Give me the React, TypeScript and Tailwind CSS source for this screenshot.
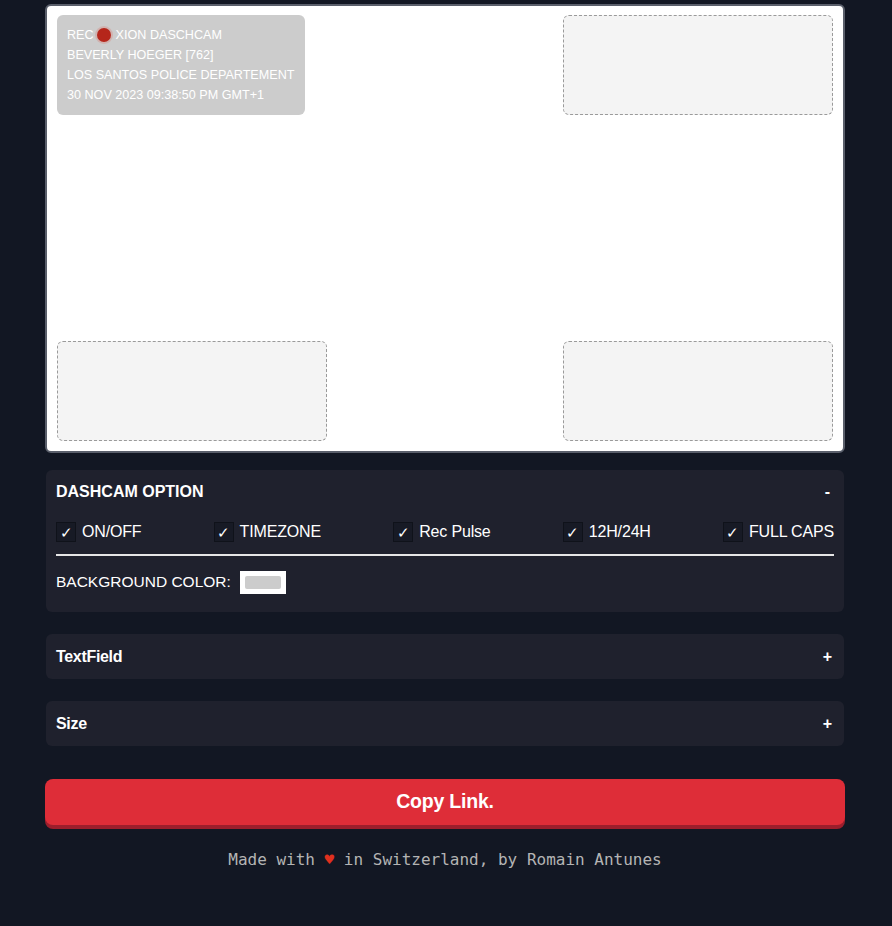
const checks = ["ON/OFF", "TIMEZONE", "Rec Pulse", "12H/24H", "FULL CAPS"];

function DropZone() {
  return <div className="h-[100px] w-[270px] rounded-md border border-dashed border-[#9a9a9a] bg-[#f4f4f4]" />;
}

function Check({ label }: { label: string }) {
  return (
    <label className="flex items-center gap-[6px]">
      <span className="flex h-[20px] w-[20px] items-center justify-center border border-[#0f121a] bg-[#171a25] text-[15px] leading-none text-white">
        ✓
      </span>
      <span className="text-[16px] tracking-[-0.01em] text-white">{label}</span>
    </label>
  );
}

function Collapsed({ title }: { title: string }) {
  return (
    <div className="mt-[22px] flex h-[45px] items-center justify-between rounded-md bg-[#1f212d] px-[10px]">
      <span className="text-[16px] font-bold tracking-[-0.02em] text-white">{title}</span>
      <span className="mr-[2px] text-[16px] font-bold text-white">+</span>
    </div>
  );
}

export default function App() {
  return (
    <div className="min-h-screen bg-[#121723] pb-10 pt-[4px] font-['Liberation_Sans',Arial,sans-serif]">
      <div className="ml-[45px] w-[800px]">
        <div className="flex h-[449px] flex-col justify-between rounded-md border-2 border-[#5a5f6b] bg-white px-[10px] pb-[10px] pt-[9px]">
          <div className="flex items-start justify-between">
            <div className="h-[100px] w-[248px] whitespace-nowrap rounded-md bg-[#cccccc] px-[10px] pt-[10px] text-[12.6px] leading-[20px] text-white">
              <div className="flex items-center">
                REC
                <span className="ml-[3px] mr-[5px] h-[14px] w-[14px] rounded-full bg-[#b5261b] shadow-[0_0_0_2px_rgba(220,120,110,0.3)]" />
                XION DASCHCAM
              </div>
              <div>BEVERLY HOEGER [762]</div>
              <div>LOS SANTOS POLICE DEPARTEMENT</div>
              <div>30 NOV 2023 09:38:50 PM GMT+1</div>
            </div>
            <DropZone />
          </div>
          <div className="flex items-end justify-between">
            <DropZone />
            <DropZone />
          </div>
        </div>

        <div className="mx-[1px] mt-[17px] rounded-md bg-[#1f212d] px-[10px] pb-[18px] pt-[10px]">
          <div className="flex h-[24px] items-center justify-between">
            <span className="text-[16px] font-bold text-white">DASHCAM OPTION</span>
            <span className="mr-[4px] text-[16px] font-bold text-white">-</span>
          </div>
          <div className="mt-[16px] flex h-[24px] items-center justify-between">
            {checks.map((c) => (
              <Check key={c} label={c} />
            ))}
          </div>
          <div className="mt-[10px] h-[2px] bg-[#e6e6e6]" />
          <div className="mt-[14px] flex h-[24px] items-center gap-[9px]">
            <span className="text-[15.5px] text-white">BACKGROUND COLOR:</span>
            <div className="flex h-[23px] w-[46px] items-center justify-center bg-white">
              <div className="h-[13px] w-[36px] rounded-[2px] bg-[#cccccc]" />
            </div>
          </div>
        </div>

        <div className="mx-[1px]">
          <Collapsed title="TextField" />
          <Collapsed title="Size" />
        </div>

        <button className="mt-[33px] h-[46px] w-full rounded-lg bg-[#de2d38] text-[19.5px] font-bold tracking-[-0.01em] text-white shadow-[0_4px_0_#9c1e2c]">
          Copy Link.
        </button>

        <p className="mt-[23px] text-center font-['DejaVu_Sans_Mono',monospace] text-[16px] text-[#b4b4b4]">
          Made with <span className="text-[#e0301e]">♥</span> in Switzerland, by Romain Antunes
        </p>
      </div>
    </div>
  );
}
